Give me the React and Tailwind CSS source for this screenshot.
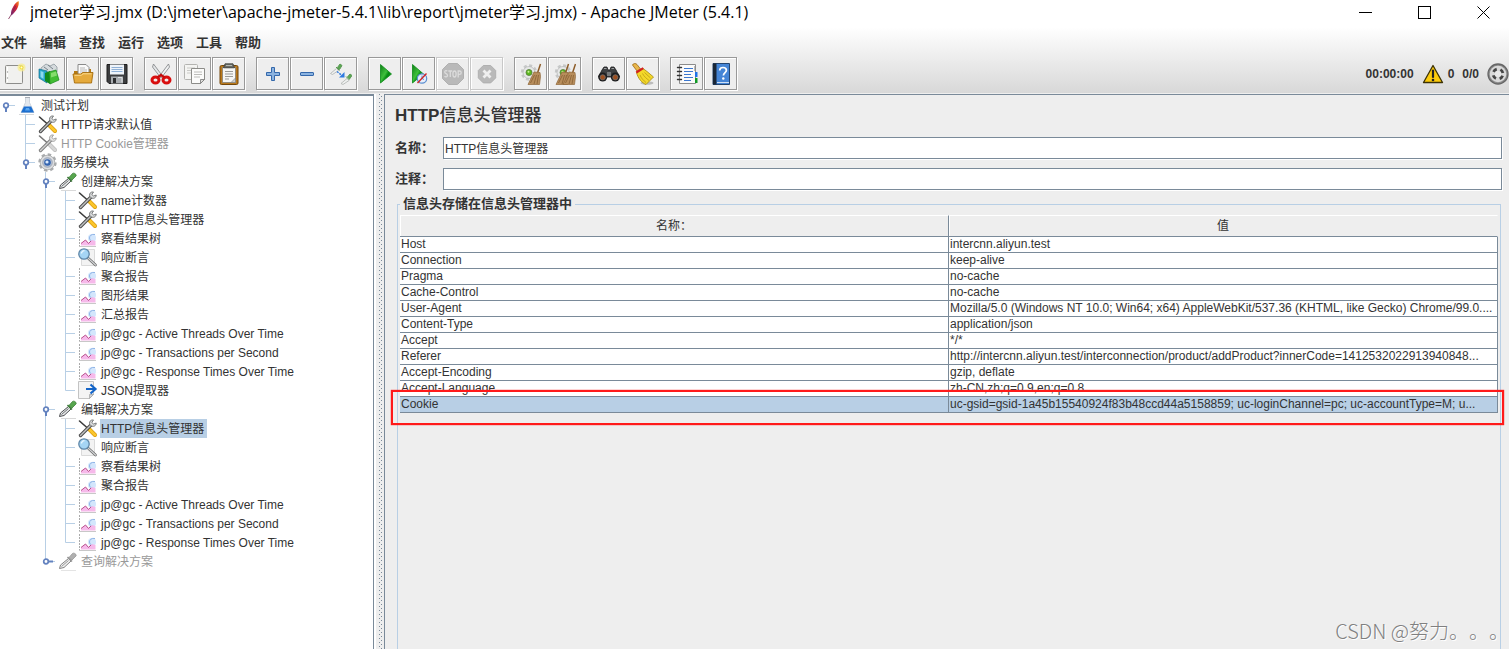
import React from "react";

/* ---------- toolbar icons (22 x 22 grid) ---------- */

function Ico({ children, size = "size-[22px]" }) {
  return (
    <svg viewBox="0 0 22 22" className={`${size} shrink-0`} fill="none" aria-hidden="true">
      {children}
    </svg>
  );
}

const NewIcon = () => (
  <Ico>
    <rect x="1.5" y="2.5" width="17" height="18" rx="1" fill="#f1f1ef" stroke="#8d8d8b" />
    <path d="M3.5 4v15" stroke="#fff" />
    <circle cx="3.5" cy="9" r=".7" fill="#999" />
    <circle cx="3.5" cy="15" r=".7" fill="#999" />
    <circle cx="17.5" cy="4.5" r="4" fill="#f7ec8e" opacity=".75" />
    <circle cx="17.5" cy="4.5" r="2" fill="#f0dc3c" />
    <circle cx="17.5" cy="4.5" r="1" fill="#fffde0" />
  </Ico>
);

const TemplatesIcon = () => (
  <Ico>
    <path d="M3 5l5-4 4 2 4-2 3 3v5H3z" fill="#d5dadd" stroke="#8d979d" strokeWidth=".8" />
    <path d="M6 4l4 3M10 2l5 4" stroke="#77838a" />
    <path d="M1 6l8 2v12l-8-5z" fill="#25a4c9" stroke="#14718f" strokeWidth=".7" />
    <path d="M2.5 8l3 1v7l-3-2z" fill="#8ed9ee" />
    <path d="M7 10l5-2v13l-5-3z" fill="#128a1c" />
    <path d="M11 9l7-2 3 10-9 4z" fill="#43bd34" stroke="#178a1a" strokeWidth=".7" />
    <path d="M13 10l5-1.5 1 4-6 2z" fill="#86dd6d" />
  </Ico>
);

const OpenIcon = () => (
  <Ico>
    <path d="M2 8h5l1-2h11v12H2z" fill="#b57a12" />
    <path d="M6 1.5h8l3 3V12H6z" fill="#fafafa" stroke="#8a8a8a" />
    <path d="M8 5h5M8 7h7M8 9h7" stroke="#b8b8b8" />
    <path d="M1 11h8l1.500-1.500H21L19.500 20H2.500z" fill="#e5aa3c" stroke="#a56c0c" strokeWidth=".9" />
    <path d="M2.500 12.300h7l1.500-1.500h8.500" stroke="#f9d98c" />
  </Ico>
);

const SaveIcon = () => (
  <Ico>
    <path d="M1 1.500h20v19H3l-2-2z" fill="#3c3d3f" stroke="#1c1c1d" />
    <rect x="4" y="1.500" width="14" height="10" fill="#eef3f9" />
    <path d="M5.500 4.500h11M5.500 6.500h11M5.500 8.500h11" stroke="#8fb0d6" />
    <rect x="5" y="13.500" width="12" height="7" fill="#a9adb1" />
    <rect x="7" y="15" width="3" height="5" fill="#2b2c2e" />
    <path d="M12 14.500h4v5" stroke="#dfe1e3" />
  </Ico>
);

const CutIcon = () => (
  <Ico>
    <path d="M3.500 1l9 12-2 1.500L2.500 4z" fill="#e4e6e8" stroke="#7d8083" strokeWidth=".8" />
    <path d="M18.500 1l-9 12 2 1.500L19.500 4z" fill="#f1f2f3" stroke="#7d8083" strokeWidth=".8" />
    <ellipse cx="5.500" cy="17" rx="3.500" ry="3" stroke="#d90f0f" strokeWidth="3" />
    <ellipse cx="16.500" cy="17" rx="3.500" ry="3" stroke="#d90f0f" strokeWidth="3" />
    <path d="M7.500 14.500L11 12l3.500 2.500" stroke="#c40c0c" strokeWidth="2.400" />
  </Ico>
);

const CopyIcon = () => (
  <Ico>
    <rect x=".5" y="1.500" width="13" height="15" rx="1" fill="#f4f4f2" stroke="#b3b3b0" />
    <path d="M3 5h8M3 7.500h8M3 10h5" stroke="#c9c9c6" />
    <path d="M7.500 5.500h13v11l-4 4h-9z" fill="#fbfbfa" stroke="#8c8c89" />
    <path d="M10 9h8M10 11.500h8M10 14h6" stroke="#bcbcb9" />
    <path d="M20.500 16.500h-4v4z" fill="#dededb" stroke="#777" strokeWidth=".8" />
  </Ico>
);

const PasteIcon = () => (
  <Ico>
    <rect x="2" y="2.500" width="18" height="19" rx="1.500" fill="#b9791b" stroke="#73470a" />
    <rect x="4.500" y="4.500" width="13" height="15" fill="#f6f6f4" stroke="#85827b" strokeWidth=".8" />
    <path d="M7 .8h8l1.500 4h-11z" fill="#6a6c67" stroke="#3d3f3b" strokeWidth=".8" />
    <path d="M8 2.500h6" stroke="#b5b8b0" />
    <path d="M7 8.500h8M7 11h8M7 13.500h8M7 16h4" stroke="#9b9b98" />
    <path d="M17.500 15v4.500H13z" fill="#cfcfcb" stroke="#777" strokeWidth=".6" />
  </Ico>
);

const PlusIcon = () => (
  <Ico>
    <path d="M9.500 4.500h3v5h5v3h-5v5h-3v-5h-5v-3h5z" fill="#8bb3e0" stroke="#3468ab" strokeLinejoin="round" />
  </Ico>
);

const MinusIcon = () => (
  <Ico>
    <rect x="4.500" y="9.500" width="13" height="3" rx=".5" fill="#8bb3e0" stroke="#3468ab" />
  </Ico>
);

const ToggleIcon = () => (
  <Ico>
    <path d="M.5 10.500l6-5 2 2-6 4z" fill="#eef0ef" stroke="#a6aaa8" strokeWidth=".7" />
    <path d="M6 4l3.500 3.500M7.500 4.500L10 1l2 1.500-2.500 4z" fill="#5ba653" stroke="#5a9a54" />
    <path d="M7 8.500l5 4" stroke="#2f7ae0" strokeWidth="1.400" strokeDasharray="2 1" />
    <path d="M14.500 9v5.500H9z" fill="#2f7ae0" />
    <path d="M11 20.500l6-5 2 2-6 4z" fill="#eef0ef" stroke="#a6aaa8" strokeWidth=".7" />
    <path d="M16 13.500l3.500 3.500M17.500 14l2.500-3 2 1.500-2.500 3.500z" fill="#5ba653" stroke="#5a9a54" />
  </Ico>
);

const RunIcon = () => (
  <Ico>
    <defs>
      <linearGradient id="runFill" x1="0" y1="0" x2="1" y2="1">
        <stop offset="0" stopColor="#0c7d16" />
        <stop offset=".45" stopColor="#3fc03c" />
        <stop offset=".6" stopColor="#078a12" />
        <stop offset="1" stopColor="#12a51d" />
      </linearGradient>
    </defs>
    <path d="M6.500 1.500L17.500 11 6.500 20z" fill="url(#runFill)" stroke="#0b8a17" strokeWidth=".8" />
  </Ico>
);

const RunNoPauseIcon = () => (
  <Ico>
    <path d="M4.500 1.500L15.500 11 4.500 20z" fill="url(#runFill)" stroke="#0b8a17" strokeWidth=".8" />
    <circle cx="14" cy="15.500" r="4.700" fill="#e6eefa" stroke="#5b8ed0" strokeWidth="1.200" />
    <path d="M14 12.500v3l2 1" stroke="#5b8ed0" />
    <path d="M9.500 20l9-9.500" stroke="#d02727" strokeWidth="1.400" />
  </Ico>
);

const StopIcon = () => (
  <Ico>
    <path d="M6.500 .5h9l6 6v9l-6 6h-9l-6-6v-9z" fill="#b9b9b9" stroke="#b0b0b0" />
    <g stroke="#dcdcdc" strokeWidth="1.300">
      <path d="M5.300 8.200C4.500 7.300 2.700 7.500 2.700 9c0 2 2.800 1.400 2.800 3.500 0 1.600-2.200 1.800-3 .7M6.300 8h4M8.300 8v6" />
      <ellipse cx="12.500" cy="11" rx="1.600" ry="3" />
      <path d="M16.200 14.500V8h1.300c2.300 0 2.300 3.300 0 3.300h-1.300" />
    </g>
  </Ico>
);

const ShutdownIcon = () => (
  <Ico>
    <path d="M7.300 2.500h7.400l5 5v7.400l-5 5H7.300l-5-5V7.500z" fill="#b9b9b9" stroke="#b0b0b0" />
    <path d="M7.500 7.500l7 7m0-7l-7 7" stroke="#efefef" strokeWidth="2.800" />
  </Ico>
);

const Gear = () => (
  <g>
    <circle cx="9" cy="9.500" r="6.900" stroke="#c6c8c8" strokeWidth="2.600" strokeDasharray="3 2.400" />
    <circle cx="9" cy="9.500" r="6" fill="#e6e7e7" stroke="#b3b4b4" strokeWidth=".7" />
    <circle cx="9" cy="9.500" r="3" fill="#5bb81f" stroke="#56793c" strokeWidth=".8" />
    <circle cx="8.500" cy="8.700" r="1" fill="#c9f29b" />
  </g>
);

const Broom = ({ x = 0 }) => (
  <g transform={`translate(${x} 0)`}>
    <path d="M20.500 1l-3 9" stroke="#8c5b27" strokeWidth="1.500" />
    <path d="M14 9l6 .5.500 4-1 8H8z" fill="#b78d5b" stroke="#8f673a" strokeWidth=".7" />
    <path d="M14.500 12l-4 8M16.500 12l-2.500 9M18.500 12l-1.500 9" stroke="#80592e" strokeWidth=".7" />
  </g>
);

const ClearIcon = () => (
  <Ico>
    <Gear />
    <Broom />
  </Ico>
);

const ClearAllIcon = () => (
  <Ico>
    <Gear />
    <Broom x={-6} />
    <Broom x={1} />
  </Ico>
);

const SearchIcon = () => (
  <Ico>
    <path d="M4 7l2-3h3l1 3h2l1-3h3l2 3 3.500 7H.5z" fill="#3e4042" stroke="#1a1b1c" strokeWidth=".8" />
    <path d="M6 5.500h2.500M13.500 5.500H16" stroke="#9a9d9f" strokeWidth="1.200" />
    <circle cx="4.700" cy="14" r="4.500" fill="#1e1e1f" />
    <circle cx="17.300" cy="14" r="4.500" fill="#1e1e1f" />
    <circle cx="4.700" cy="14.300" r="2.600" fill="#9c4f20" stroke="#777" strokeWidth=".7" />
    <circle cx="17.300" cy="14.300" r="2.600" fill="#9c4f20" stroke="#777" strokeWidth=".7" />
    <rect x="9" y="9" width="4" height="4" fill="#75787a" />
  </Ico>
);

const ResetSearchIcon = () => (
  <Ico>
    <ellipse cx="15" cy="20" rx="6.500" ry="1.700" fill="#bcbcbc" />
    <path d="M.5 2C1 .3 4 0 5 1.500L8.500 6 5 8z" fill="#e9b64b" stroke="#9c6a15" strokeWidth=".8" />
    <path d="M4.500 9.500L11 5.500l4 3L21.500 14 14 21.500C10 20 6 15.500 4.500 9.500z" fill="#f3d82a" stroke="#a58910" strokeWidth=".8" />
    <path d="M8 12c1 3 3.500 5.500 6 7.500M10.500 10.500c1.500 3 4 5 6.500 7M12.500 9.500l6 5.500" stroke="#bb9c14" strokeWidth=".8" />
    <path d="M4.300 9.500l7-4.400" stroke="#d42020" strokeWidth="2.200" />
  </Ico>
);

const FunctionIcon = () => (
  <Ico>
    <path d="M3.500 1.500h16v19h-16z" fill="#fbfbfb" stroke="#8b8b8b" />
    <path d="M18.500 3v5" stroke="#bbb" />
    <rect x="19" y="9" width="2.500" height="5" fill="#1e73e8" />
    <rect x="19" y="15" width="2.500" height="5" fill="#0f9a25" />
    <path d="M8 5.500h9M8 8.500h9M8 11.500h7M8 14.500h9M8 17.500h7" stroke="#3c78d0" />
    <path d="M1.500 4.500h4M1.500 8.500h4M1.500 12.500h4M1.500 16.500h4" stroke="#333" strokeWidth="1.400" strokeLinecap="round" />
  </Ico>
);

const HelpIcon = () => (
  <Ico>
    <path d="M3 .5h16.500v21H3z" fill="#4585d6" stroke="#24456f" />
    <path d="M3 .5h3.500v21H3z" fill="#1b2736" />
    <path d="M7 19.500h12" stroke="#cfe0f5" />
    <path
      d="M9.700 7.500C9.700 5.500 11 4.500 13 4.500s3.400 1.100 3.400 2.800c0 2.200-3 2.400-3 5.200"
      stroke="#fff"
      strokeWidth="1.700"
    />
    <circle cx="13.300" cy="15.500" r="1.200" fill="#fff" />
  </Ico>
);

const WarningIcon = () => (
  <svg viewBox="0 0 22 20" className="h-5 w-[22px] shrink-0" aria-hidden="true">
    <path d="M11 1.500L20.500 18.500h-19z" fill="#fccb0c" stroke="#3c3206" strokeWidth="1.300" strokeLinejoin="round" />
    <path d="M11 6.500v6.500" stroke="#222" strokeWidth="2.200" strokeLinecap="round" />
    <circle cx="11" cy="16" r="1.300" fill="#222" />
  </svg>
);

const ThreadsIcon = () => (
  <Ico>
    <circle cx="11" cy="11" r="10" fill="#8b8b8b" stroke="#666" strokeWidth="1.300" />
    <circle cx="11" cy="11" r="8.300" fill="#d9d9d9" />
    <circle cx="11" cy="11" r="5" stroke="#454545" strokeWidth="2.800" strokeDasharray="4 3.854" strokeDashoffset="-1.927" />
    <circle cx="11" cy="11" r="3" fill="#e8e8e8" />
  </Ico>
);

const FeatherIcon = () => (
  <svg viewBox="0 0 16 20" className="h-5 w-4 shrink-0" aria-hidden="true">
    <defs>
      <linearGradient id="featherFill" x1="1" y1="0" x2="0" y2="1">
        <stop offset="0" stopColor="#f59a23" />
        <stop offset=".4" stopColor="#d8202f" />
        <stop offset="1" stopColor="#6d2b88" />
      </linearGradient>
    </defs>
    <path d="M12.500 1c1 2.500-.5 7-2.500 9.500-1.500 2-3 3.500-4.500 5-1-1.500-.5-4 .5-6.500C7.500 5.500 10 2 12.500 1z" fill="url(#featherFill)" />
    <path d="M9.500 6L5 15l-2.500 4" stroke="#7c2a52" strokeWidth=".8" fill="none" />
  </svg>
);

/* ---------- tree icons (20 x 19 grid) ---------- */

function TreeSvg({ children, gray }) {
  return (
    <svg viewBox="0 0 20 19" className={gray ? "h-[19px] w-5 shrink-0 opacity-70 grayscale" : "h-[19px] w-5 shrink-0"} fill="none" aria-hidden="true">
      {children}
    </svg>
  );
}

const treeIcons = {
  plan: () => (
    <>
      <path d="M7.500 1.500h4v5l4.500 10H3l4.500-10z" fill="#e3e8ee" stroke="#c3cbd5" strokeWidth=".8" />
      <path d="M6 10.500h7.200l2.800 6H3z" fill="#1c6fd0" />
      <path d="M8 12h3l1 2.500H7z" fill="#58a6f0" />
      <path d="M7 1.500h5" stroke="#a7adb5" />
      <path d="M1 18.500h15" stroke="#d6d8db" />
    </>
  ),
  config: () => (
    <>
      <path d="M1.500 2l8.500 7.500" stroke="#3b3b3b" strokeWidth="1.600" strokeLinecap="round" />
      <path d="M10.500 9.500l6.500 6.500" stroke="#d99a0a" strokeWidth="4" strokeLinecap="round" />
      <path d="M10.500 9.500l6.500 6.500" stroke="#fbc62c" strokeWidth="2.600" strokeLinecap="round" />
      <path d="M2.500 16.500L13 6" stroke="#4a4a4a" strokeWidth="3.400" strokeLinecap="round" />
      <path d="M2.500 16.500L13 6" stroke="#bfc1c2" strokeWidth="1.400" strokeLinecap="round" />
      <path d="M15.500 1c-2.500-.5-4.300 1.200-3.900 3.700.3 1.700 2 2.900 4 2.600 1.600-.3 2.600-1.600 2.600-3.300l-2.600 1-1.800-1.500z" fill="#d9dbdc" stroke="#6e7072" strokeWidth=".9" />
    </>
  ),
  group: () => (
    <>
      <circle cx="9.500" cy="9.500" r="8" stroke="#a9abad" strokeWidth="2.400" strokeDasharray="3.400 2.880" />
      <circle cx="9.500" cy="9.500" r="7.300" fill="#dcdddf" stroke="#9a9c9e" strokeWidth=".7" />
      <circle cx="9.500" cy="9.500" r="4.800" fill="#b9c4d6" stroke="#8d97a8" strokeWidth=".7" />
      <circle cx="9.500" cy="9.500" r="3.300" fill="#3565b0" />
      <circle cx="9" cy="9" r="1.600" fill="#dbe9fb" />
    </>
  ),
  controller: () => (
    <>
      <path d="M1.500 16.500l1-3.500 8-6.500L13 9l-7 6.500z" fill="#e7e9ea" stroke="#4b4d50" />
      <path d="M3.500 14.500l7-6" stroke="#6a6c6e" strokeWidth="1" />
      <path d="M9.500 5l4.500 4.500" stroke="#3b7a36" strokeWidth="1.600" />
      <path d="M11 5.500l3.500-4c1-1 4 .2 3.700 2.300L14 8z" fill="#57a64e" stroke="#3d7f38" strokeWidth=".8" />
      <path d="M3 18.500h15" stroke="#d9d9d9" />
    </>
  ),
  chart: () => (
    <>
      <path d="M1.500 1v16.500" stroke="#aaa" strokeDasharray="2 1" />
      <path d="M1 17.500h17" stroke="#c8c8c8" />
      <circle cx="14" cy="9" r="4" fill="#d3e6fc" />
      <path d="M17 5.500c-3.500-.8-5.500 1.300-5.500 3.500 0 1.800 1.500 3 3 3" stroke="#8fb4e6" />
      <path d="M3 16.500v-2L7.500 11l3 3 3.500-3 3.500 1v4.500z" fill="#f6b9ea" />
      <path d="M3 14.500L7.500 11l3 3.500 2.500-2.500" stroke="#b9508c" />
    </>
  ),
  assertion: () => (
    <>
      <path d="M3.500 1.500h13v16h-13z" fill="#f3f3f3" stroke="#dadada" />
      <path d="M10.500 10.500l7 6.500" stroke="#666" strokeWidth="2.600" strokeLinecap="round" />
      <path d="M10.500 10.500l7 6.500" stroke="#d3d5d7" strokeWidth="1.200" strokeLinecap="round" />
      <circle cx="6" cy="6" r="5.200" fill="#a5d5f5" stroke="#5f87a8" strokeWidth="1.300" />
      <path d="M3.500 5.500C3.500 4 5 2.700 6.500 2.700" stroke="#eef8ff" strokeWidth="1.300" />
    </>
  ),
  extractor: () => (
    <>
      <path d="M.5 .5h15v13l-4 4H.5z" fill="#f4f4f4" stroke="#c3c3c3" />
      <path d="M15.500 13.500h-4v4z" fill="#cfd3d8" stroke="#a0a0a0" strokeWidth=".7" />
      <path d="M8 8h8.500M12.500 3.500L17.500 8l-5 4.500" stroke="#1565c8" strokeWidth="2.200" />
    </>
  ),
};

/* ---------- tree data ---------- */

const LINE = "#b8cfe5";

const tree = {
  label: "测试计划",
  icon: "plan",
  open: true,
  children: [
    { label: "HTTP请求默认值", icon: "config" },
    { label: "HTTP Cookie管理器", icon: "config", disabled: true },
    {
      label: "服务模块",
      icon: "group",
      open: true,
      children: [
        {
          label: "创建解决方案",
          icon: "controller",
          open: true,
          children: [
            { label: "name计数器", icon: "config" },
            { label: "HTTP信息头管理器", icon: "config" },
            { label: "察看结果树", icon: "chart" },
            { label: "响应断言", icon: "assertion" },
            { label: "聚合报告", icon: "chart" },
            { label: "图形结果", icon: "chart" },
            { label: "汇总报告", icon: "chart" },
            { label: "jp@gc - Active Threads Over Time", icon: "chart" },
            { label: "jp@gc - Transactions per Second", icon: "chart" },
            { label: "jp@gc - Response Times Over Time", icon: "chart" },
            { label: "JSON提取器", icon: "extractor" },
          ],
        },
        {
          label: "编辑解决方案",
          icon: "controller",
          open: true,
          children: [
            { label: "HTTP信息头管理器", icon: "config", selected: true },
            { label: "响应断言", icon: "assertion" },
            { label: "察看结果树", icon: "chart" },
            { label: "聚合报告", icon: "chart" },
            { label: "jp@gc - Active Threads Over Time", icon: "chart" },
            { label: "jp@gc - Transactions per Second", icon: "chart" },
            { label: "jp@gc - Response Times Over Time", icon: "chart" },
          ],
        },
        { label: "查询解决方案", icon: "controller", disabled: true, open: false, children: [] },
      ],
    },
  ],
};

function Guide({ line }) {
  return (
    <svg viewBox="0 0 20 19" className="h-[19px] w-5 shrink-0" aria-hidden="true">
      {line && <path d="M5.500 0v19" stroke={LINE} />}
    </svg>
  );
}

function Joint({ root, last, handle, open }) {
  return (
    <svg viewBox="0 0 18 19" className="h-[19px] w-[18px] shrink-0" fill="none" aria-hidden="true">
      {!root && <path d={last ? "M5.500 0v9.500" : "M5.500 0v19"} stroke={LINE} />}
      <path d="M5.500 9.500H15" stroke={LINE} />
      {handle && (
        <g stroke="#6382bf">
          <path d={open ? "M6 11v5" : "M8 9.500h5"} strokeWidth="2" />
          <circle cx="6" cy="9.500" r="2.300" fill="#fff" strokeWidth="1.700" />
        </g>
      )}
    </svg>
  );
}

function TreeNode({ node, guides = [], root = false, last = true }) {
  const Drawing = treeIcons[node.icon];
  const handle = Array.isArray(node.children);
  const tone = node.disabled ? "text-[#999999]" : node.selected ? "bg-[#b8cfe5] text-[#333333]" : "text-[#333333]";
  return (
    <li role="treeitem" aria-expanded={handle ? node.open : undefined} aria-selected={!!node.selected}>
      <div className="flex h-[19px] items-center whitespace-nowrap">
        {guides.map((g, i) => (
          <Guide key={i} line={g} />
        ))}
        <Joint root={root} last={last} handle={handle} open={node.open} />
        <TreeSvg gray={node.disabled}>
          <Drawing />
        </TreeSvg>
        <span className={`ml-0.5 h-[19px] pr-[3px] pl-px leading-5 ${tone}`}>{node.label}</span>
      </div>
      {handle && node.open && (
        <ul role="group">
          {node.children.map((c, i) => (
            <TreeNode
              key={c.label}
              node={c}
              guides={[...guides, !root && !last]}
              last={i === node.children.length - 1}
            />
          ))}
        </ul>
      )}
    </li>
  );
}

/* ---------- chrome ---------- */

const menus = ["文件", "编辑", "查找", "运行", "选项", "工具", "帮助"];

const toolGroups = [
  [
    ["新建", NewIcon],
    ["模板", TemplatesIcon],
    ["打开", OpenIcon],
    ["保存", SaveIcon],
  ],
  [
    ["剪切", CutIcon],
    ["复制", CopyIcon],
    ["粘贴", PasteIcon],
  ],
  [
    ["展开", PlusIcon],
    ["折叠", MinusIcon],
    ["切换", ToggleIcon],
  ],
  [
    ["启动", RunIcon],
    ["不停顿开始", RunNoPauseIcon],
    ["停止", StopIcon, true],
    ["关闭", ShutdownIcon, true],
  ],
  [
    ["清除", ClearIcon],
    ["清除全部", ClearAllIcon],
  ],
  [
    ["查找", SearchIcon],
    ["重置搜索", ResetSearchIcon],
  ],
  [
    ["函数助手", FunctionIcon],
    ["帮助", HelpIcon],
  ],
];

function ToolButton({ label, Icon, disabled }) {
  return (
    <button
      type="button"
      aria-label={label}
      disabled={disabled}
      className={`flex size-[33px] items-center justify-center border bg-[#eeeeee] shadow-[1px_1px_0_#ffffff,inset_1px_1px_0_#ffffff] ${
        disabled ? "border-[#c8c8c8]" : "border-[#999999]"
      }`}
    >
      <Icon />
    </button>
  );
}

function WindowButton({ label, children }) {
  return (
    <button type="button" aria-label={label} className="flex h-6 w-[59px] items-center justify-center">
      <svg viewBox="0 0 13 13" className="size-[13px]" fill="none" stroke="#000" aria-hidden="true">
        {children}
      </svg>
    </button>
  );
}

const headers = [
  ["Host", "intercnn.aliyun.test"],
  ["Connection", "keep-alive"],
  ["Pragma", "no-cache"],
  ["Cache-Control", "no-cache"],
  [
    "User-Agent",
    "Mozilla/5.0 (Windows NT 10.0; Win64; x64) AppleWebKit/537.36 (KHTML, like Gecko) Chrome/99.0....",
  ],
  ["Content-Type", "application/json"],
  ["Accept", "*/*"],
  ["Referer", "http://intercnn.aliyun.test/interconnection/product/addProduct?innerCode=1412532022913940848..."],
  ["Accept-Encoding", "gzip, deflate"],
  ["Accept-Language", "zh-CN,zh;q=0.9,en;q=0.8"],
  ["Cookie", "uc-gsid=gsid-1a45b15540924f83b48ccd44a5158859; uc-loginChannel=pc; uc-accountType=M; u..."],
];

function Field({ id, label, value }) {
  return (
    <div className="flex h-[22px] items-center">
      <label htmlFor={id} className="w-12 shrink-0 text-[13px] leading-[22px] font-bold">
        {label}
      </label>
      <input
        id={id}
        type="text"
        defaultValue={value}
        className="h-[22px] min-w-0 flex-1 border border-[#7a8a99] bg-white px-px pb-0.5 shadow-[1px_1px_0_#ffffff] outline-none"
      />
    </div>
  );
}

export default function App() {
  return (
    <div className="relative flex min-h-screen flex-col overflow-hidden bg-[#eeeeee] font-['Liberation_Sans','Noto_Sans_CJK_SC',sans-serif] text-[12px] text-[#333333]">
      <header>
        <div className="flex h-[27px] items-start bg-white pl-1.5">
          <FeatherIcon />
          <h1 className="ml-2 flex-1 truncate font-['Open_Sans','Noto_Sans_CJK_SC',sans-serif] text-[16px] leading-6 text-black">
            jmeter学习.jmx (D:\jmeter\apache-jmeter-5.4.1\lib\report\jmeter学习.jmx) - Apache JMeter (5.4.1)
          </h1>
          <div className="-mr-1 flex">
            <WindowButton label="最小化">
              <path d="M0 6.500h13" />
            </WindowButton>
            <WindowButton label="最大化">
              <rect x=".5" y=".5" width="12" height="12" />
            </WindowButton>
            <WindowButton label="关闭窗口">
              <path d="M.5 .5l12 12m0-12l-12 12" />
            </WindowButton>
          </div>
        </div>

        <div className="border-b border-[#eeeeee] bg-linear-to-b from-white to-[#d8d8d8] pb-[3px]">
          <nav className="flex h-[30px] items-center gap-[13px] pt-0.5 pl-px">
            {menus.map((m) => (
              <button key={m} type="button" className="text-[13px] leading-4 font-bold">
                {m}
              </button>
            ))}
          </nav>
          <div className="-ml-0.5 flex items-center" role="toolbar" aria-label="工具栏">
            <div className="flex flex-1 gap-[11px]">
              {toolGroups.map((g, i) => (
                <div key={i} className="flex gap-px">
                  {g.map(([label, Icon, disabled]) => (
                    <ToolButton key={label} label={label} Icon={Icon} disabled={disabled} />
                  ))}
                </div>
              ))}
            </div>
            <div className="flex items-center font-bold">
              <span>00:00:00</span>
              <span className="ml-2 flex items-center gap-1">
                <WarningIcon />0
              </span>
              <span className="ml-2">0/0</span>
              <span className="ml-2">
                <ThreadsIcon />
              </span>
            </div>
          </div>
        </div>
      </header>

      <div className="flex flex-1">
        <aside className="w-[374px] shrink-0 border-t-2 border-r border-[#7a8a99] bg-white">
          <ul role="tree" aria-label="测试计划">
            <TreeNode node={tree} root />
          </ul>
        </aside>
        <div
          role="separator"
          aria-orientation="vertical"
          className="flex w-2.5 shrink-0 border-l-2 border-white bg-[#eeeeee] pl-[3px]"
        >
          <div className="w-1 bg-[radial-gradient(circle_at_0.5px_0.5px,#7a8a99_0.6px,transparent_0.7px),radial-gradient(circle_at_2.5px_2.5px,#7a8a99_0.6px,transparent_0.7px)] bg-size-[4px_4px]" />
        </div>

        <main className="flex min-w-0 flex-1 flex-col border-t border-l border-[#7a8a99] pr-[7px] pl-2.5">
          <h2 className="flex h-[42px] items-center text-[17px] leading-6">
            <span className="font-bold">HTTP</span>
            <span className="font-medium">信息头管理器</span>
          </h2>
          <div className="flex flex-col gap-[9px]">
            <Field id="name" label="名称：" value="HTTP信息头管理器" />
            <Field id="comment" label="注释：" value="" />
          </div>

          <fieldset className="mt-1.5 mr-px ml-0.5 min-w-0 flex-1 border border-b-0 border-[#b8cfe5] px-0.5">
            <legend className="px-[3px] text-[13px] leading-4 font-bold">信息头存储在信息头管理器中</legend>
            <div className="relative mt-[3px]">
              <table className="w-full table-fixed border-separate border-spacing-0">
                <thead>
                  <tr className="h-[22px]">
                    {["名称：", "值"].map((h) => (
                      <th
                        key={h}
                        scope="col"
                        className="border-t border-r border-b border-t-white border-r-[#7a8a99] border-b-[#7a8a99] p-0 leading-5 font-normal shadow-[inset_1px_0_0_#ffffff] last:border-r-transparent"
                      >
                        {h}
                      </th>
                    ))}
                  </tr>
                </thead>
                <tbody>
                  {headers.map(([name, value]) => (
                    <tr key={name} className={name === "Cookie" ? "bg-[#b8cfe5]" : "bg-white"}>
                      <td className="truncate border-r border-b border-[#7a8a99] p-0 pl-px leading-[15px]">{name}</td>
                      <td className="truncate border-r border-b border-[#7a8a99] p-0 pl-px leading-[15px]">{value}</td>
                    </tr>
                  ))}
                </tbody>
              </table>
              <div className="pointer-events-none absolute -right-1.5 -bottom-3 -left-[9px] h-[35px] border-2 border-[#ff1a1a] shadow-[0_0_1px_#ff0000]" />
            </div>
          </fieldset>
        </main>
      </div>

      <p className="pointer-events-none absolute right-0 bottom-1 font-['Noto_Sans_CJK_SC',sans-serif] text-[20px] leading-7 font-light text-[#808080] [font-feature-settings:'chws'_0,'halt'_0] [text-shadow:1px_1px_0_#ffffff] [text-spacing-trim:space-all]">
        CSDN @努力。。。
      </p>
    </div>
  );
}
